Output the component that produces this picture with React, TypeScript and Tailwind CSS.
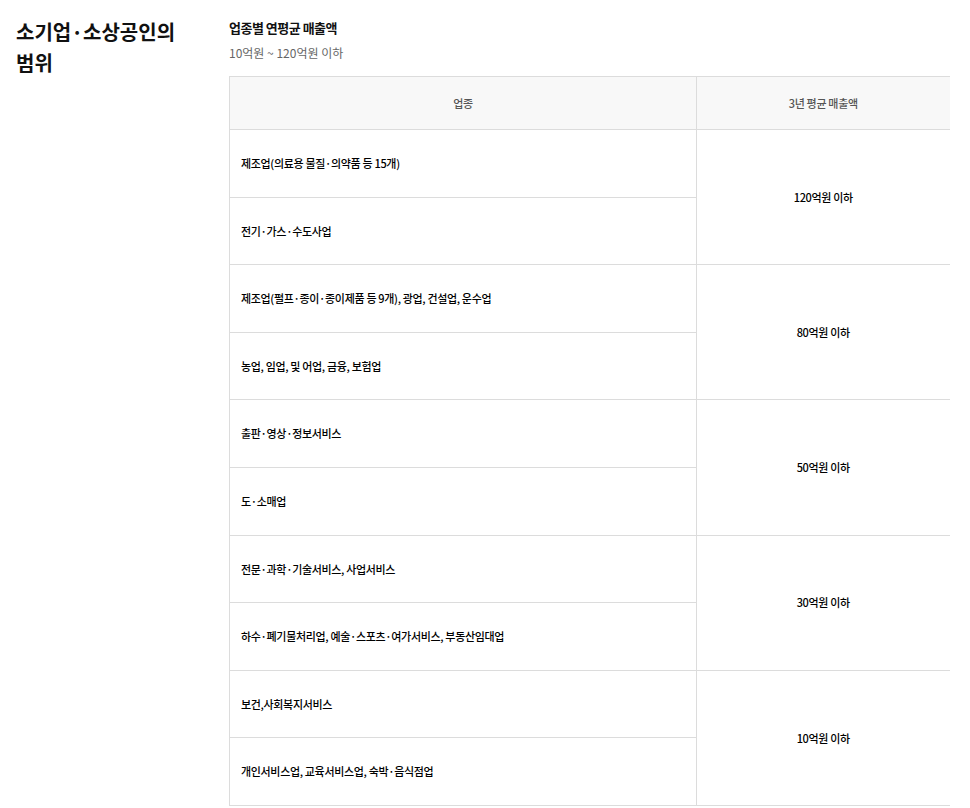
const rows = [
  { group: "120억원 이하", items: ["제조업(의료용 물질·의약품 등 15개)", "전기·가스·수도사업"] },
  { group: "80억원 이하", items: ["제조업(펄프·종이·종이제품 등 9개), 광업, 건설업, 운수업", "농업, 임업, 및 어업, 금융, 보험업"] },
  { group: "50억원 이하", items: ["출판·영상·정보서비스", "도·소매업"] },
  { group: "30억원 이하", items: ["전문·과학·기술서비스, 사업서비스", "하수·폐기물처리업, 예술·스포츠·여가서비스, 부동산임대업"] },
  { group: "10억원 이하", items: ["보건,사회복지서비스", "개인서비스업, 교육서비스업, 숙박·음식점업"] },
];

export default function App() {
  return (
    <div
      className="flex bg-white text-[#111] pt-[16px]"
      style={{ fontFamily: '"Noto Sans CJK KR", "Noto Sans", sans-serif' }}
    >
      <div className="w-[229px] shrink-0 pl-[16px]">
        <h2 className="text-[20px] leading-[31px] font-bold tracking-[0px]">
          소기업·소상공인의
          <br />
          범위
        </h2>
      </div>

      <div className="w-[720px]">
        <h3 className="text-[13px] leading-[22px] font-bold tracking-[-0.5px] mt-[1px]">업종별 연평균 매출액</h3>
        <p className="text-[12px] leading-[20px] text-[#666] tracking-[0px] mt-[4px]">10억원 ~ 120억원 이하</p>

        <table className="mt-[13px] w-[720px] border-collapse table-fixed text-[11px] tracking-[-0.33px]">
          <colgroup>
            <col className="w-[467px]" />
            <col className="w-[253px]" />
          </colgroup>
          <thead>
            <tr className="h-[53px] bg-[#f8f8f8] border-t border-[#dcdcdc]">
              <th className="border-l border-r border-b border-[#dcdcdc] font-medium text-[#555]">업종</th>
              <th className="border-b border-[#dcdcdc] font-medium text-[#555]">3년 평균 매출액</th>
            </tr>
          </thead>
          <tbody>
            {rows.map((r) =>
              r.items.map((item, i) => (
                <tr key={item} className="h-[67.6px]">
                  <td className="border-l border-r border-b border-[#dcdcdc] pl-[11px] font-medium text-[#000]">
                    {item}
                  </td>
                  {i === 0 && (
                    <td rowSpan={2} className="border-b border-[#dcdcdc] text-center font-medium text-[#000]">
                      {r.group}
                    </td>
                  )}
                </tr>
              ))
            )}
          </tbody>
        </table>
      </div>
    </div>
  );
}
